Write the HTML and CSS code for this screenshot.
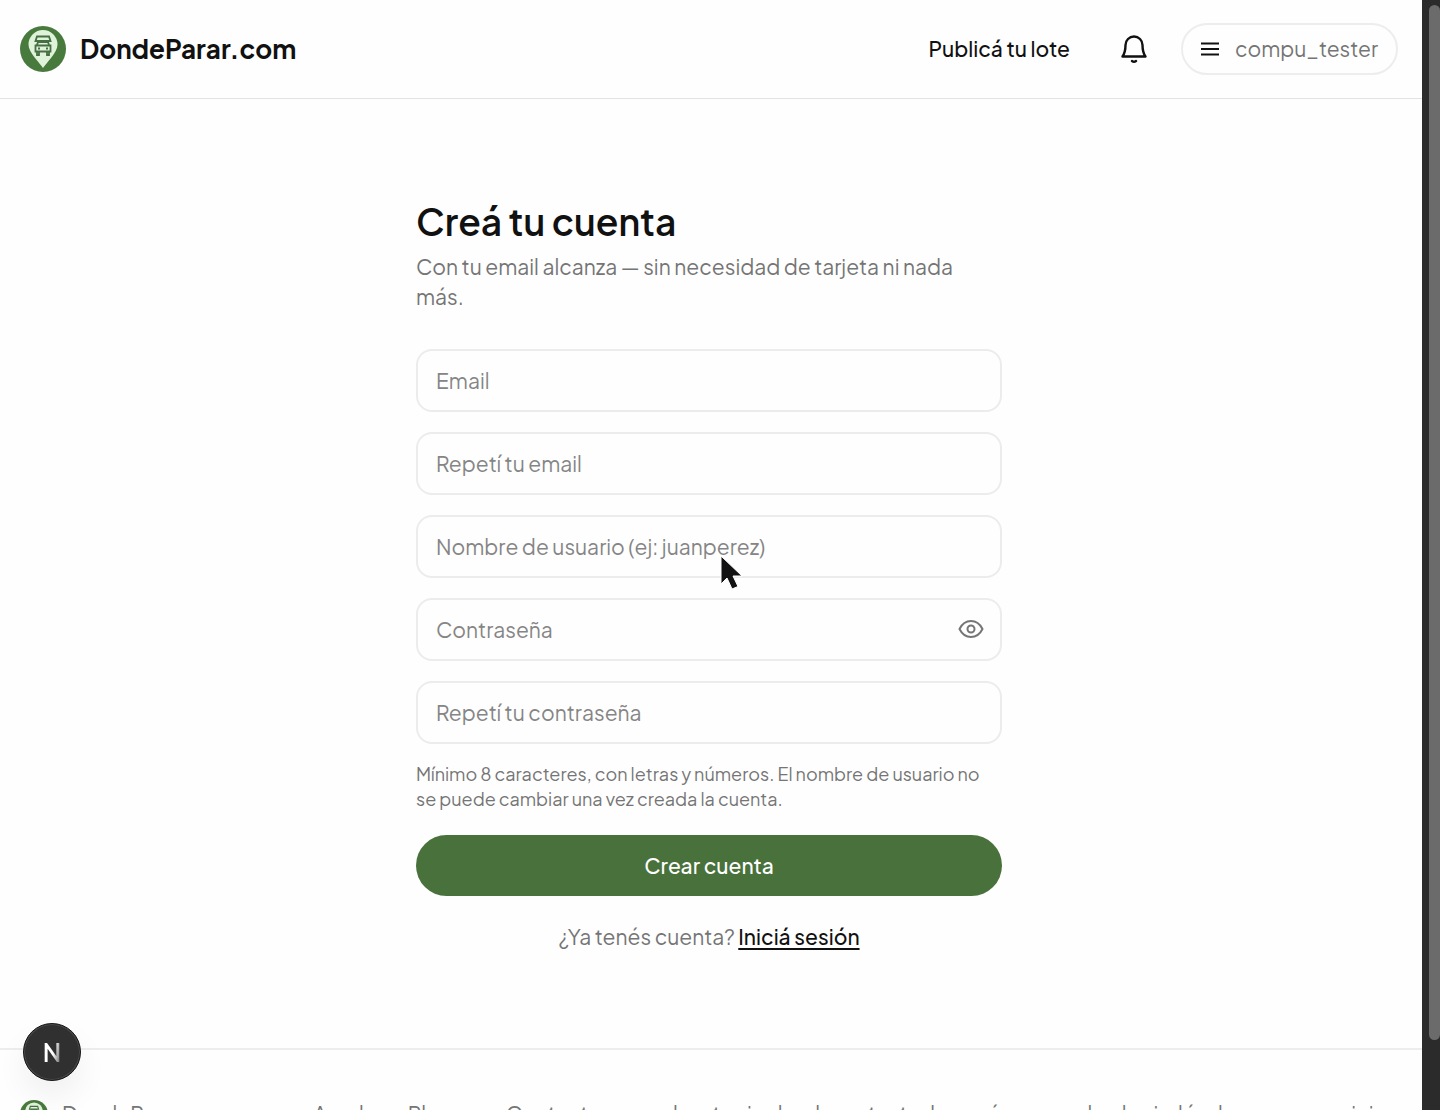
FILE: index.html
```
<!DOCTYPE html>
<html lang="es">
<head>
    <title>Creá tu cuenta - DondeParar.com</title>

    <meta charset="utf-8"/>
    <meta name="viewport" content="width=device-width, initial-scale=1"/>

    <link rel="stylesheet" href="styles.css">
</head>
<body>

<!-- shared logo, used in the header and the footer -->
<svg class="defs" aria-hidden="true">
    <symbol id="logo" viewBox="0 0 46 46">
        <circle cx="23" cy="23" r="23" fill="#487a3e"/>
        <path d="M23 42 C20 37 8.500 27 8.500 18.500 a14.500 14.500 0 0 1 29 0 C37.500 27 26 37 23 42z" fill="#def3d9"/>
        <g fill="none" stroke="#466f43" stroke-width="1.800">
            <path d="M17 10.500h12l1.500 4.500h-15z"/>
            <path d="M17 19l1-3h10l1 3M15.500 19.500h15v6h-15zM18 22.500h2M26 22.500h2M17 26v3h2v-3M27 26v3h2v-3"/>
        </g>
    </symbol>
</svg>

<div class="window">
    <div class="page">
        <header class="header">
            <a class="brand" href="#">
                <svg class="brand-logo" aria-hidden="true"><use href="#logo"/></svg>
                <span>DondeParar.com</span>
            </a>
            <nav class="nav">
                <a class="publish" href="#">Publicá tu lote</a>
                <button class="bell" type="button" aria-label="Notificaciones">
                    <svg width="28" height="30" viewBox="0 0 28 30" fill="none" stroke="#111" stroke-width="2.400" stroke-linecap="round" stroke-linejoin="round">
                        <path d="M2.500 22.500 C5 19 5.500 16 5.500 11 a8.500 8.500 0 0 1 17 0 c0 5 .5 8 3 11.500z"/>
                        <path d="M12 27q2 1.600 4 0"/>
                    </svg>
                </button>
                <button class="user" type="button">
                    <svg width="18" height="14" viewBox="0 0 18 14" stroke="#111" stroke-width="2" aria-hidden="true">
                        <path d="M0 1.500h18M0 7h18M0 12.500h18"/>
                    </svg>
                    <span>compu_tester</span>
                </button>
            </nav>
        </header>

        <main class="main">
            <form class="signup">
                <h1 class="title">Creá tu cuenta</h1>
                <p class="lead">Con tu email alcanza — sin necesidad de tarjeta ni nada más.</p>

                <div class="fields">
                    <div class="field">
                        <input type="email" aria-label="Email" placeholder="Email">
                    </div>
                    <div class="field">
                        <input type="email" aria-label="Repetí tu email" placeholder="Repetí tu email">
                    </div>
                    <div class="field">
                        <input type="text" aria-label="Nombre de usuario" placeholder="Nombre de usuario (ej: juanperez)">
                        <svg class="pointer" width="24" height="36" viewBox="0 0 24 36" aria-hidden="true">
                            <path d="M1 1v28l6-6 5 11 6-2.500-5-10.500h9z" fill="#111" stroke="#fff" stroke-width="1"/>
                        </svg>
                    </div>
                    <div class="field">
                        <input type="password" aria-label="Contraseña" placeholder="Contraseña">
                        <button class="show" type="button" aria-label="Mostrar contraseña">
                            <svg width="26" height="20" viewBox="0 0 26 20" fill="none" stroke="#757575" stroke-width="2" stroke-linejoin="round">
                                <path d="M1.500 10C4 5 8 2 13 2s9 3 11.500 8C22 15 18 18 13 18S4 15 1.500 10z"/>
                                <circle cx="13" cy="10" r="3.500"/>
                            </svg>
                        </button>
                    </div>
                    <div class="field">
                        <input type="password" aria-label="Repetí tu contraseña" placeholder="Repetí tu contraseña">
                    </div>
                </div>

                <p class="hint">Mínimo 8 caracteres, con letras y números. El nombre de usuario no se puede cambiar una vez creada la cuenta.</p>
                <button class="submit" type="submit">Crear cuenta</button>
                <p class="login">¿Ya tenés cuenta? <a href="#">Iniciá sesión</a></p>
            </form>
        </main>

        <footer class="footer">
            <a class="footer-brand" href="#">
                <svg class="footer-logo" aria-hidden="true"><use href="#logo"/></svg>
                <span>DondeParar</span>
            </a>
            <nav class="footer-nav">
                <a href="#">Ayuda</a>
                <a href="#">Planes</a>
                <a href="#">Contacto</a>
            </nav>
            <p class="tagline">la ruta viva hecha entre todos, más ganas de elegir dónde parar y servicios</p>
        </footer>
    </div>

    <div class="scrollbar"><div class="thumb"></div></div>
    <button class="dev" type="button"><span>N</span></button>
</div>

</body>
</html>
```
FILE: styles.css
```
* {
    box-sizing: border-box;
}

body {
    margin: 0;
    background: #fefefe;
    color: #111;
    font-family: "Plus Jakarta Sans", Inter, sans-serif;
    font-size: 21px;
    line-height: 30px;
}

h1, p {
    margin: 0;
}

a {
    color: inherit;
    text-decoration: none;
}

button, input {
    font: inherit;
    color: inherit;
}

button {
    border: 0;
    padding: 0;
    background: none;
    cursor: pointer;
}

svg {
    display: block;
}

.defs {
    position: absolute;
    width: 0;
    height: 0;
}

.window {
    display: flex;
    height: 100vh;
    overflow: hidden;
}

.page {
    flex: 1;
    min-width: 0;
}

/* header */

.header {
    display: flex;
    align-items: center;
    justify-content: space-between;
    height: 99px;
    padding: 0 24px 0 20px;
    border-bottom: 1px solid #e2e2e2;
}

.brand {
    display: flex;
    align-items: center;
    gap: 14px;
    font-size: 26px;
    font-weight: 700;
}

.brand-logo {
    width: 46px;
    height: 46px;
}

.nav {
    display: flex;
    align-items: center;
}

.publish {
    font-weight: 500;
}

.bell {
    margin: 0 33px 0 50px;
}

.user {
    display: flex;
    align-items: center;
    gap: 16px;
    height: 52px;
    padding: 0 18px;
    border: 2px solid #ededed;
    border-radius: 26px;
    color: #757575;
}

/* sign up form */

.main {
    padding: 101px 24px 96px 20px;
}

.signup {
    max-width: 586px;
    margin: 0 auto;
}

.title {
    font-size: 37px;
    font-weight: 600;
    line-height: 42px;
}

.lead {
    margin-top: 10px;
    color: #757575;
}

.fields {
    display: grid;
    gap: 20px;
    margin-top: 37px;
}

.field {
    position: relative;
}

.field input {
    display: block;
    width: 100%;
    height: 63px;
    padding: 0 18px;
    border: 2px solid #ececec;
    border-radius: 16px;
    background: #fefefe;
}

.field input::placeholder {
    color: #858585;
    opacity: 1;
}

.show {
    position: absolute;
    top: 21px;
    right: 18px;
}

.pointer {
    position: absolute;
    top: 40px;
    left: 304px;
}

.hint {
    margin-top: 17px;
    color: #757575;
    font-size: 18px;
    line-height: 25px;
}

.submit {
    display: block;
    width: 100%;
    height: 61px;
    margin-top: 24px;
    border-radius: 31px;
    background: #49713b;
    color: #fff;
    font-weight: 500;
}

.login {
    margin-top: 26px;
    color: #757575;
    text-align: center;
}

.login a {
    color: #111;
    font-weight: 500;
    text-decoration: underline;
    text-underline-offset: 3px;
}

/* footer */

.footer {
    display: flex;
    align-items: center;
    padding: 49px 24px 48px 20px;
    border-top: 2px solid #ededed;
    color: #757575;
    white-space: nowrap;
}

.footer-brand {
    display: flex;
    align-items: center;
    gap: 14px;
}

.footer-logo {
    width: 28px;
    height: 28px;
}

.footer-nav {
    display: flex;
    gap: 32px;
    margin-left: 132px;
}

.tagline {
    margin-left: auto;
}

/* scrollbar and dev badge */

.scrollbar {
    width: 18px;
    padding: 5px 0 70px 7px;
    background: #2b2b2b;
}

.thumb {
    height: 100%;
    border-radius: 6px;
    background: #6b6b6b;
}

.dev {
    position: fixed;
    left: 23px;
    bottom: 29px;
    width: 58px;
    height: 58px;
    border: 1px solid #171717;
    border-radius: 50%;
    background: #303030;
    box-shadow: inset 0 0 0 1px #4a4a4a, 0 16px 32px rgba(0, 0, 0, .06);
    font-size: 25px;
    font-weight: 600;
}

.dev span {
    background: linear-gradient(100deg, #fff 55%, #888 85%);
    -webkit-background-clip: text;
    background-clip: text;
    color: transparent;
}
```
